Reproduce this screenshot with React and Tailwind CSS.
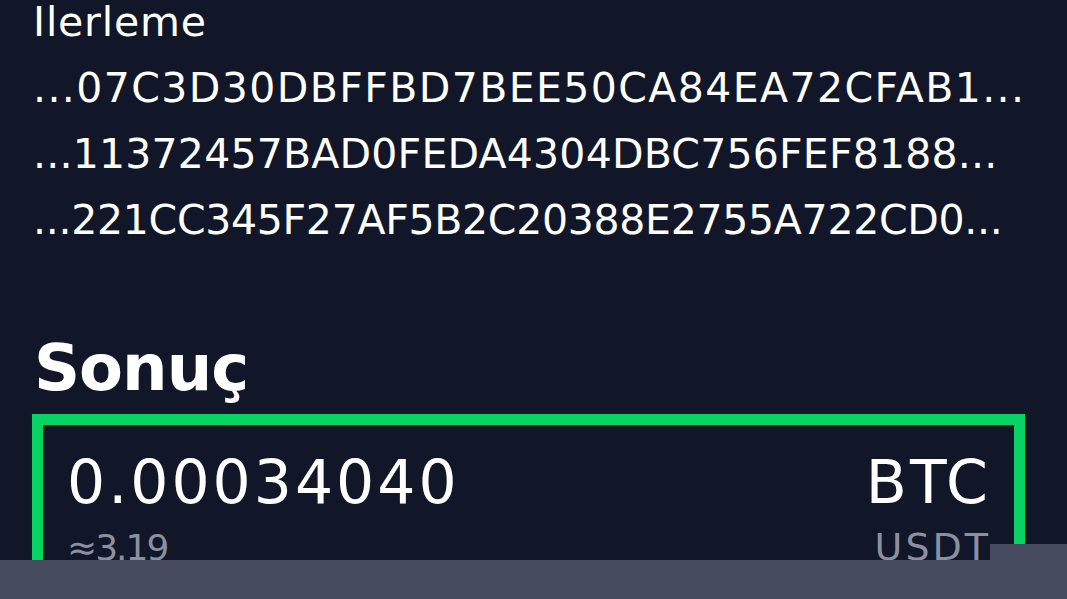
export default function App() {
  const hashes = [
    { text: '...07C3D30DBFFBD7BEE50CA84EA72CFAB1...', track: 'tracking-[1.4px]' },
    { text: '...11372457BAD0FEDA4304DBC756FEF8188...', track: 'tracking-[0.2px]' },
    { text: '...221CC345F27AF5B2C20388E2755A722CD0...', track: 'tracking-[-0.3px]' },
  ]

  return (
    <div
      className="relative w-[1067px] h-[599px] overflow-hidden bg-[#111729] text-white"
      style={{ fontFamily: '"DejaVu Sans", "Noto Sans", sans-serif' }}
    >
      <div className="pl-[32px] pr-[42px]">
        {/* Progress */}
        <div className="pl-[1px] text-[41px] leading-[44px] tracking-[0.8px]">Ilerleme</div>
        <div className="mt-[11px] pl-[1px]">
          {hashes.map(h => (
            <div key={h.text} className={`text-[41px] leading-[66px] whitespace-nowrap ${h.track}`}>{h.text}</div>
          ))}
        </div>

        {/* Result */}
        <div className="mt-[80px] pl-[2px] text-[64px] leading-[70px] font-bold tracking-[-1px]">Sonuç</div>
        <div className="mt-[11px] border-[11px] border-[#08d264] h-[220px] pl-[24px] pr-[23px] pt-[25px]">
          <div className="flex items-start justify-between">
            <div className="flex flex-col">
              <span className="text-[60px] leading-[64px] tracking-[3px]">0.00034040</span>
              <span className="mt-[12px] text-[36px] leading-[44px] tracking-[-2px] text-[#8a90a0]">≈3.19</span>
            </div>
            <div className="flex flex-col items-end">
              <span className="text-[60px] leading-[64px] tracking-[3px]">BTC</span>
              <span className="mt-[11px] text-[38px] leading-[44px] tracking-[3px] text-[#8a90a0]">USDT</span>
            </div>
          </div>
        </div>
      </div>

      {/* bottom overlay bars */}
      <div className="absolute left-[990px] top-[544px] w-[77px] h-[20px] bg-[#464b5f]" />
      <div className="absolute left-0 bottom-0 w-full h-[39px] bg-[#464b5f]" />
    </div>
  )
}
